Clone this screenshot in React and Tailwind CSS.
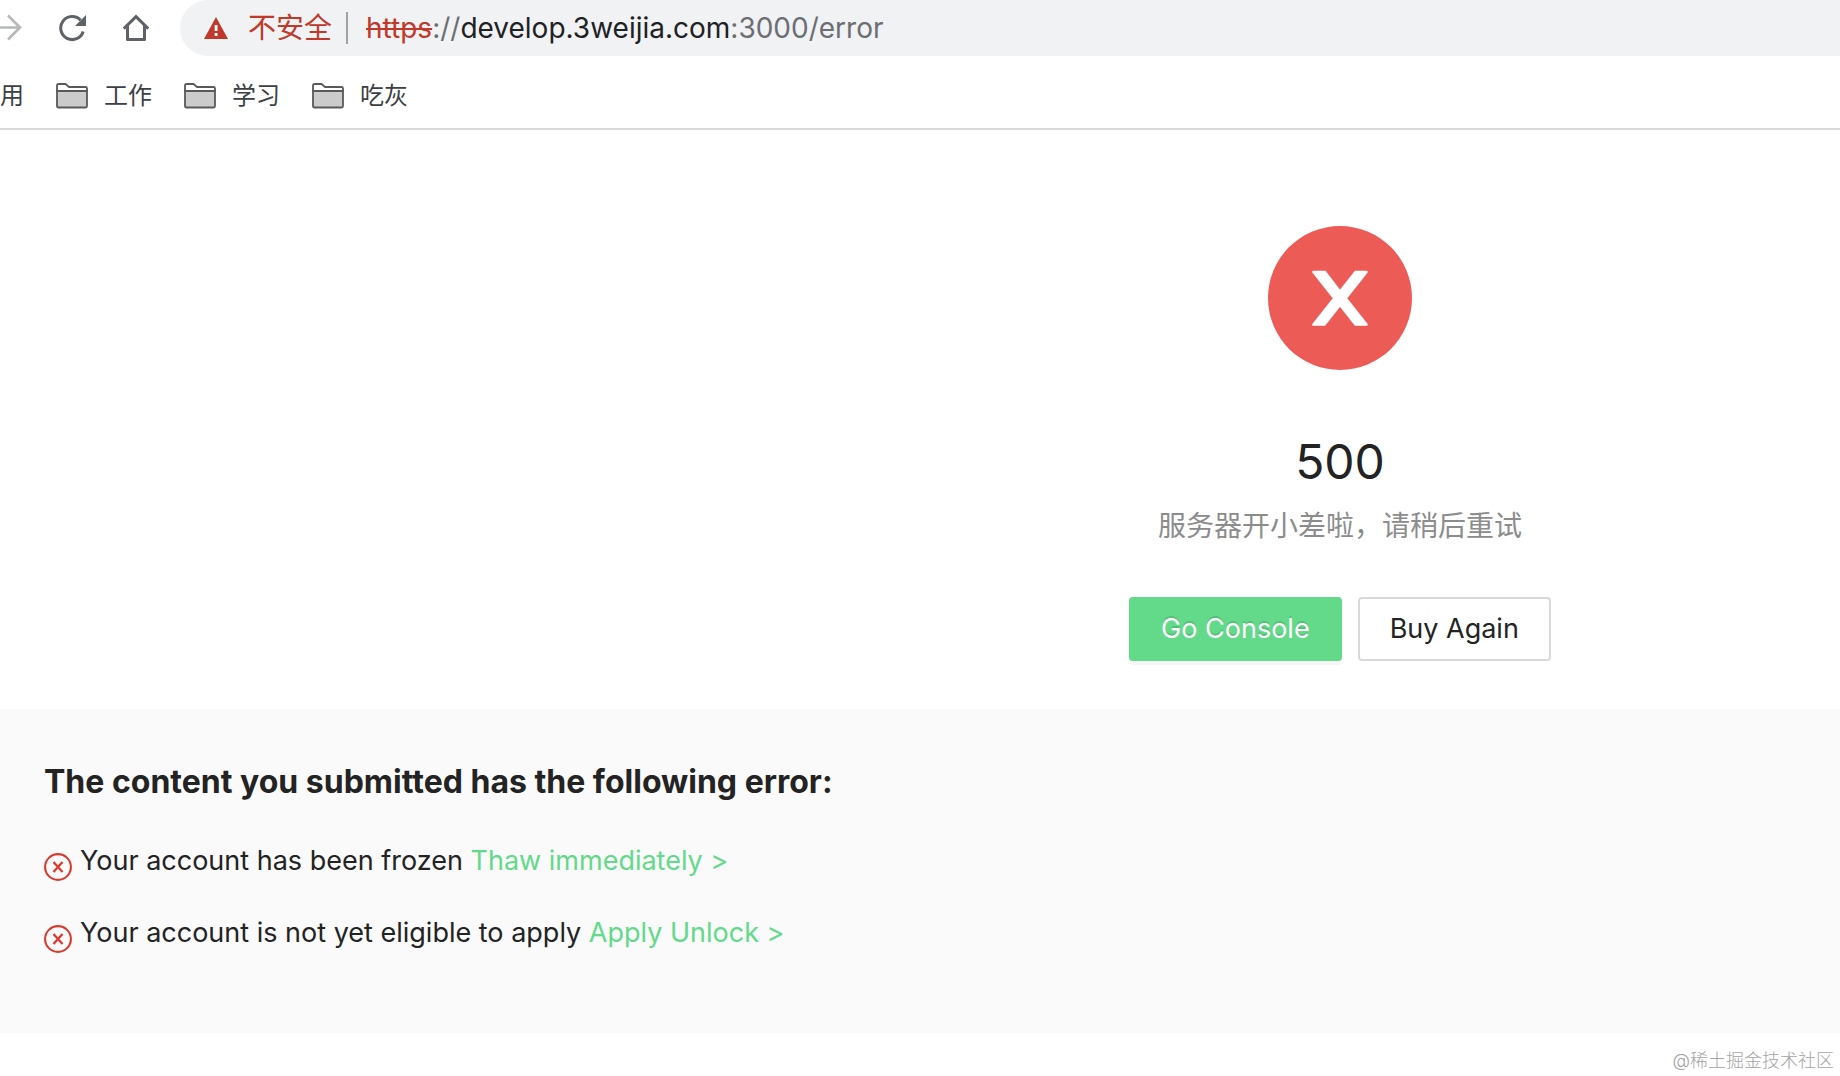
import React from "react";

const folders = ["工作", "学习", "吃灰"];

const problems = [
  { text: "Your account has been frozen", action: "Thaw immediately >" },
  { text: "Your account is not yet eligible to apply", action: "Apply Unlock >" },
];

function ForwardIcon() {
  return (
    <svg className="h-7 w-6" viewBox="0 0 24 28" fill="none" stroke="#b6b8ba" strokeWidth="2.6">
      <path d="M0 13.5H20M8 1.5L20 13.5L8 25.5" />
    </svg>
  );
}

function ReloadIcon() {
  return (
    <svg className="h-7 w-7" viewBox="0 0 28 28" fill="none">
      <path d="M22.6 6.2A11.5 11.5 0 1 0 25.2 17.5" stroke="#5f6368" strokeWidth="3" />
      <path d="M28 1V12H17Z" fill="#5f6368" />
    </svg>
  );
}

function HomeIcon() {
  return (
    <svg className="h-7 w-7" viewBox="0 0 28 28" fill="none" stroke="#5f6368" strokeWidth="3">
      <path d="M1.8 14.6L14 2.6L26.2 14.6" />
      <path d="M5.5 12V25.5H22.5V12" strokeLinejoin="round" />
    </svg>
  );
}

function WarningIcon() {
  return (
    <svg className="h-6 w-6" viewBox="0 0 24 24">
      <path d="M12 1L24 23H0Z" fill="#c0392b" />
      <path d="M10.7 9h2.8v6h-2.8zM10.7 17h2.8v3h-2.8z" fill="#fff" />
    </svg>
  );
}

function FolderIcon() {
  return (
    <svg className="h-7 w-8" viewBox="0 0 32 28" strokeWidth="1.8" stroke="#58595b" strokeLinejoin="round">
      <path d="M1 9V3.5Q1 2 2.5 2H9.5L13 5H29.5Q31 5 31 6.500V9Z" fill="#fff" />
      <path d="M1 9H31V24Q31 25.500 29.500 25.500H2.500Q1 25.500 1 24Z" fill="#cbcbcb" />
    </svg>
  );
}

function CloseCircleIcon() {
  return (
    <svg className="mt-3 h-7 w-7" viewBox="0 0 28 28" fill="none" stroke="#dc3a2f">
      <circle cx="14" cy="14" r="12.9" strokeWidth="2.1" />
      <path d="M9.500 9L18.500 19M18.500 9L9.500 19" strokeWidth="2.3" />
    </svg>
  );
}

export default function App() {
  return (
    <div className="min-h-screen bg-white font-['Inter','Noto_Sans_CJK_SC',sans-serif] text-[#232323]">
      <header className="border-b-2 border-[#d9dadb]">
        <div className="flex h-14 items-center">
          <button aria-label="Forward" className="mr-[34px]">
            <ForwardIcon />
          </button>
          <button aria-label="Reload" className="mr-9">
            <ReloadIcon />
          </button>
          <button aria-label="Home" className="mr-[30px]">
            <HomeIcon />
          </button>
          <div className="flex h-14 flex-1 items-center rounded-l-full bg-[#f1f2f4] pl-6 text-[28px]">
            <button className="flex items-center gap-5 text-[#c0392b]">
              <WarningIcon />
              <span>不安全</span>
            </button>
            <span className="mr-[18px] ml-[14px] h-8 w-0.5 bg-[#a0a3a6]" />
            <div className="whitespace-nowrap text-[#6b6e72]">
              <span className="text-[#c0392b] line-through">https</span>://
              <span className="text-[#202124]">develop.3weijia.com</span>:3000/error
            </div>
          </div>
        </div>
        <nav className="flex h-[72px] items-center gap-8 pt-2 text-2xl text-[#3c4043]">
          <a href="#apps">用</a>
          {folders.map((name) => (
            <a key={name} href="#folder" className="flex items-center gap-4">
              <FolderIcon />
              {name}
            </a>
          ))}
        </nav>
      </header>

      <main>
        <section className="flex flex-col items-center pt-24 pb-12 pl-[840px]">
          <svg className="h-36 w-36" viewBox="0 0 144 144">
            <circle cx="72" cy="72" r="72" fill="#ec5b56" />
            <path
              d="M46 45H57.500L72 64L87 45H98Q100.500 45 99 47L79 72.300L99 97.500Q100.500 99.500 98 99.500H87L72 80.500L57 99.500H46Q43 99.500 45 97.500L65 72.300L45 47Q43 45 46 45Z"
              fill="#fff"
              stroke="#fff"
              strokeWidth="0.6"
            />
          </svg>
          <h1 className="mt-14 text-5xl leading-[72px]">500</h1>
          <p className="text-[28px] leading-[56px] text-[#8c8c8c]">服务器开小差啦，请稍后重试</p>
          <div className="mt-[43px] flex gap-4 text-[27px]">
            <button className="h-16 rounded bg-[#63d98a] px-8 text-white shadow-[0_4px_0_rgba(0,0,0,0.04)] [text-shadow:0_-2px_0_rgba(0,0,0,0.12)]">
              Go Console
            </button>
            <button className="h-16 rounded border-2 border-[#d9d9d9] bg-white px-[30px]">Buy Again</button>
          </div>
        </section>

        <section className="bg-[#fafafa] px-11 pt-12 pb-16">
          <h2 className="text-[32px] leading-[50px] font-bold">The content you submitted has the following error:</h2>
          <ul className="mt-[18px] text-[27px] leading-[72px]">
            {problems.map(({ text, action }) => (
              <li key={text} className="flex items-center gap-2">
                <CloseCircleIcon />
                <span>
                  {text}{" "}
                  <a href="#resolve" className="text-[#63d98a]">
                    {action}
                  </a>
                </span>
              </li>
            ))}
          </ul>
        </section>
      </main>

      <footer className="pt-[14px] pr-1.5 text-right text-lg font-light text-[#a3a3a3]">@稀土掘金技术社区</footer>
    </div>
  );
}
